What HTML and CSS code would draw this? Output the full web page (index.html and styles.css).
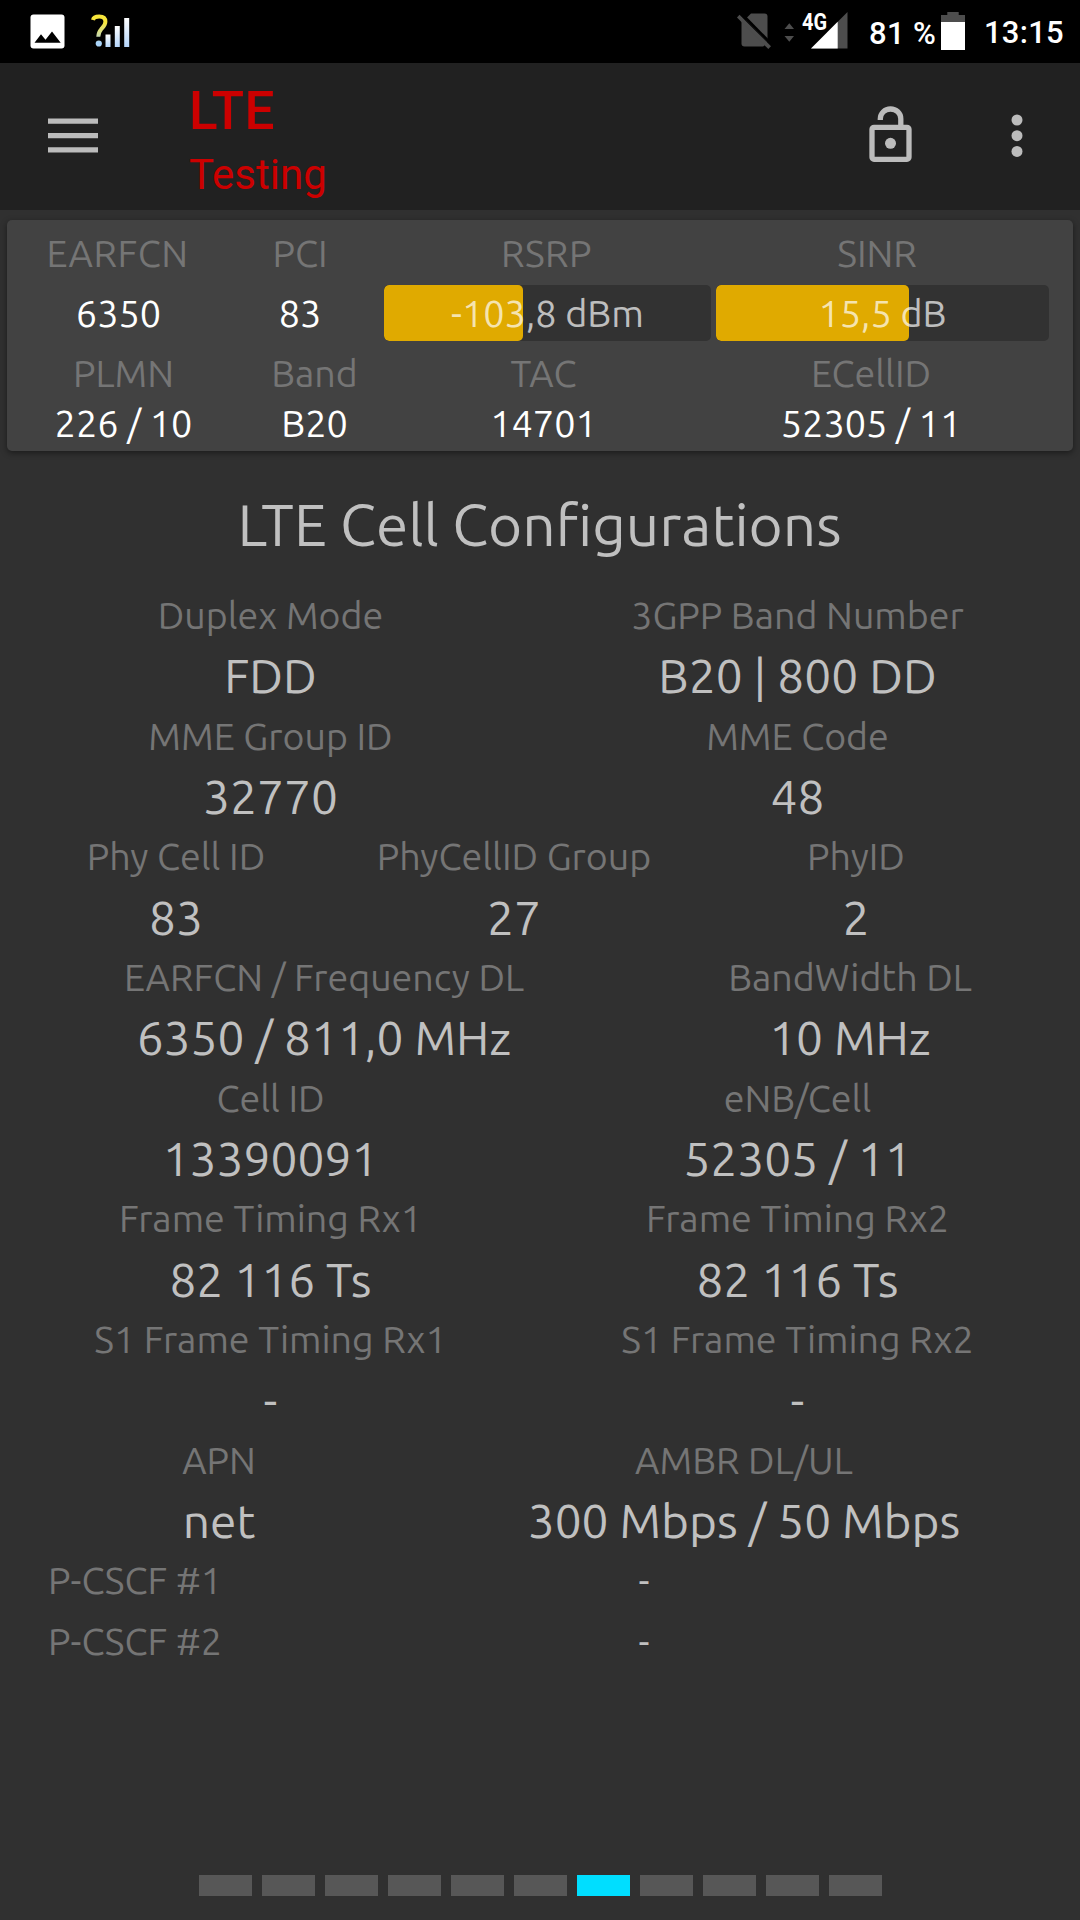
FILE: index.html
```html
<!DOCTYPE html>
<html lang="en">
<head>
<meta charset="utf-8">
<title>LTE Cell Configurations</title>
<link rel="stylesheet" href="styles.css">
</head>
<body>
<div class="screen">
  <header class="status">
    <div class="status-left">
      <svg class="ico-image" width="35" height="35" viewBox="0 0 35 35"><rect x=".5" y=".5" width="34" height="34" rx="3" fill="#fff"/><path d="M4.500 28.700 11 20.200l4.500 5.500 6.500-8.200 8.700 11.200z" fill="#000"/></svg>
      <svg width="39" height="33" viewBox="0 0 39 33">
        <defs>
          <linearGradient id="q" gradientUnits="userSpaceOnUse" x1="0" y1="0" x2="0" y2="33"><stop offset=".25" stop-color="#f7e53b"/><stop offset=".7" stop-color="#c5d9b4"/><stop offset=".85" stop-color="#a9d3f8"/></linearGradient>
          <linearGradient id="b" x1="0" y1="0" x2="0" y2="1"><stop offset="0" stop-color="#fff"/><stop offset="1" stop-color="#b5d6fb"/></linearGradient>
        </defs>
        <path d="M2 6C2.500 3.500 5 2.500 8.200 2.500c4 0 6.200 2 6.200 5.200 0 3.400-2.100 5.100-4.200 7.500-2.200 2.500-2.900 4.300-2.900 7.600" fill="none" stroke="url(#q)" stroke-width="4"/>
        <circle cx="7.800" cy="29.500" r="3.100" fill="url(#q)"/>
        <path d="M14.500 20.500h5v12.500h-5z" fill="url(#b)"/><path d="M23.800 12h5v21h-5z" fill="url(#b)"/><path d="M33.200 4h5v29h-5z" fill="url(#b)"/>
      </svg>
    </div>
    <div class="status-right">
      <svg class="network" width="112" height="48" viewBox="0 -8 112 48">
        <g fill="#4d4d4d">
          <path d="M14 1.500h13.500a3 3 0 0 1 3 3v26L9.500 8.500V6z"/>
          <path d="M4.500 8.500 28 32.500a3 3 0 0 1-2 2H7.500a3 3 0 0 1-3-3z"/>
          <path d="M2.500 2.800 34 34.300 31.300 37 0 5.500z"/>
          <path d="M47.500 17 52.300 11.300 57 17zM47.500 24 52.300 29.800 57 24z"/>
        </g>
        <path d="M6 3.300 32 29.700" stroke="#000" stroke-width="2.800"/>
        <path d="M110.500 0v36.500H74z" fill="#4d4d4d"/>
        <path d="M100.700 9.800v26.700H74z" fill="#fff"/>
        <text class="net-type" x="65" y="18" textLength="25" lengthAdjust="spacingAndGlyphs">4G</text>
      </svg>
      <span class="percent">81 %</span>
      <svg width="24" height="38" viewBox="0 0 24 38"><path d="M6.300 0h11.400v3H24v7.500H0V3h6.300z" fill="#4d4d4d"/><path d="M0 10h24v28H0z" fill="#fff"/></svg>
      <span class="clock">13:15</span>
    </div>
  </header>

  <div class="toolbar">
    <svg class="menu" width="50" height="35" viewBox="0 0 50 35" fill="#bcbcbc"><path d="M0 .5h50v5.300H0zM0 15h50v5.300H0zM0 29.300h50v5.300H0z"/></svg>
    <div class="titles">
      <h1>LTE</h1>
      <p>Testing</p>
    </div>
    <svg class="lock" width="43" height="56" viewBox="0 0 43 56"><g fill="none" stroke="#bcbcbc" stroke-width="5.300"><rect x="3" y="21.300" width="37" height="32" rx="2"/><path d="M11.300 14v-1.200c0-5.600 4.400-9.800 10.200-9.800s10.300 4.200 10.300 9.800V21"/></g><circle cx="21.500" cy="37.300" r="5.500" fill="#bcbcbc"/></svg>
    <svg class="more" width="12" height="44" viewBox="0 0 12 44" fill="#bcbcbc"><circle cx="6" cy="6" r="5.500"/><circle cx="6" cy="21.700" r="5.500"/><circle cx="6" cy="37.400" r="5.500"/></svg>
  </div>

  <section class="card">
    <div class="row top labels">
      <span class="wide">EARFCN</span><span>PCI</span><span class="wide">RSRP</span><span class="sinr">SINR</span>
    </div>
    <div class="row top readings">
      <span>6350</span><span>83</span>
      <span class="bar"><i class="fill" style="width:42.5%"></i><b>-103,8 dBm</b></span>
      <span class="bar"><i class="fill" style="width:58%"></i><b>15,5 dB</b></span>
    </div>
    <div class="row bottom labels">
      <span>PLMN</span><span>Band</span><span>TAC</span><span>ECellID</span>
    </div>
    <div class="row bottom values">
      <span>226 / 10</span><span>B20</span><span>14701</span><span>52305 / 11</span>
    </div>
  </section>

  <main>
    <h2>LTE Cell Configurations</h2>
    <dl class="two">
      <dt>Duplex Mode</dt><dt>3GPP Band Number</dt>
      <dd>FDD</dd><dd>B20 | 800 DD</dd>
      <dt>MME Group ID</dt><dt>MME Code</dt>
      <dd>32770</dd><dd>48</dd>
    </dl>
    <dl class="three">
      <dt>Phy Cell ID</dt><dt>PhyCellID Group</dt><dt>PhyID</dt>
      <dd>83</dd><dd>27</dd><dd>2</dd>
    </dl>
    <dl class="freq">
      <dt>EARFCN / Frequency DL</dt><dt>BandWidth DL</dt>
      <dd>6350 / 811,0 MHz</dd><dd>10 MHz</dd>
    </dl>
    <dl class="two">
      <dt>Cell ID</dt><dt>eNB/Cell</dt>
      <dd>13390091</dd><dd>52305 / 11</dd>
      <dt>Frame Timing Rx1</dt><dt>Frame Timing Rx2</dt>
      <dd>82 116 Ts</dd><dd>82 116 Ts</dd>
      <dt>S1 Frame Timing Rx1</dt><dt>S1 Frame Timing Rx2</dt>
      <dd>-</dd><dd>-</dd>
    </dl>
    <dl class="apn">
      <dt>APN</dt><dt>AMBR DL/UL</dt>
      <dd>net</dd><dd>300 Mbps / 50 Mbps</dd>
    </dl>
    <dl class="pcscf">
      <dt>P-CSCF #1</dt><dd>-</dd>
      <dt>P-CSCF #2</dt><dd>-</dd>
    </dl>
  </main>

  <nav class="pager"><i></i><i></i><i></i><i></i><i></i><i></i><i class="current"></i><i></i><i></i><i></i><i></i></nav>
</div>
</body>
</html>
```
FILE: styles.css
```css
* { box-sizing: border-box; margin: 0; padding: 0; }

body { background: #303030; }

svg { display: block; flex: none; }

.screen {
  width: 1080px;
  height: 1920px;
  display: flex;
  flex-direction: column;
  font-family: Ubuntu, "Noto Sans", sans-serif;
  color: #c0c0c0;
  overflow: hidden;
}

/* Status bar */
.status {
  height: 63px;
  background: #000;
  display: flex;
  justify-content: space-between;
  padding: 0 16px 0 30px;
  font-family: Roboto, sans-serif;
  font-weight: 500;
  font-size: 31px;
  line-height: 36px;
  color: #fff;
}
.status-left, .status-right { display: flex; align-items: flex-start; }
.status-left { gap: 26px; padding-top: 14px; }
.status-right { padding-top: 12px; }
.network { margin-top: -8px; }
.net-type { font-family: Roboto, sans-serif; font-weight: 700; font-size: 23px; fill: #fff; }
.percent { width: 92px; padding: 4px 0 0 20px; white-space: nowrap; letter-spacing: .35px; }
.clock { padding: 3px 0 0 19px; width: 99px; white-space: nowrap; letter-spacing: .25px; }

/* Toolbar */
.toolbar {
  height: 147px;
  background: #212121;
  display: flex;
  align-items: center;
  padding: 0 57px 0 48px;
}
.titles {
  flex: 1;
  padding-top: 14px;
  margin-left: 91px;
  color: #cc0000;
  font-family: Roboto, sans-serif;
}
.titles h1 { font-size: 53px; line-height: 62px; font-weight: 500; letter-spacing: .5px; }
.titles p { font-size: 42px; line-height: 65px; }
.menu { margin-top: -2px; }
.lock { margin: -5px 99px 0 0; }
.more { margin-top: -2px; }

/* Signal summary card */
.card {
  margin: 10px 7px 0;
  height: 231px;
  padding-top: 8px;
  border-radius: 5px;
  background: #424242;
  box-shadow: 0 2px 6px rgba(0, 0, 0, .45);
  color: #fff;
  font-size: 37.8px;
}
.row { display: grid; text-align: center; line-height: 50px; white-space: nowrap; }
.top { grid-template-columns: 223px 140px 14px 327px 5px 333px; }
.top > :nth-child(3) { grid-column: 4; }
.top > :nth-child(4) { grid-column: 6; }
.bottom { grid-template-columns: 233px 149px 309px 346px; }
.labels { color: #757575; font-size: 37.6px; }
.labels .wide { letter-spacing: .5px; padding-right: 2px; }
.labels .sinr { padding-right: 11px; }
.readings { line-height: 56px; height: 55px; margin: 7px 0 8px; }
.bar { position: relative; border-radius: 5px; background: #323232; overflow: hidden; color: rgba(255, 255, 255, .7); }
.fill { position: absolute; left: 0; top: 0; height: 100%; border-radius: 5px; background: #e0aa00; }
.bar b { position: relative; font-weight: 400; }

/* Cell configuration */
main { flex: 1; padding: 43px 18px 0 7px; }
h2 {
  margin: 0 -10px 31px 0;
  text-align: center;
  font-weight: 400;
  font-size: 58.5px;
  line-height: 60px;
}
dl { display: grid; grid-auto-rows: 60.33px; text-align: center; white-space: nowrap; }
dt { font-size: 37.6px; line-height: 60px; color: #757575; }
dd { font-size: 47.8px; line-height: 61px; }
.two { grid-template-columns: 527px 527px; }
.three { grid-template-columns: 338px 338px 346px; }
.freq { grid-template-columns: 634px 418px; }
.apn { grid-template-columns: 424px 626px; }
.pcscf { grid-template-columns: 220px 834px; line-height: 61px; }
.pcscf dt { text-align: left; padding-left: 41px; line-height: 61px; }
.pcscf dd { font-size: 38px; }

/* Page indicator */
.pager { display: flex; justify-content: center; gap: 10px; padding-bottom: 24px; }
.pager i { width: 53px; height: 21px; background: #575757; }
.pager .current { background: #00deff; }
```
